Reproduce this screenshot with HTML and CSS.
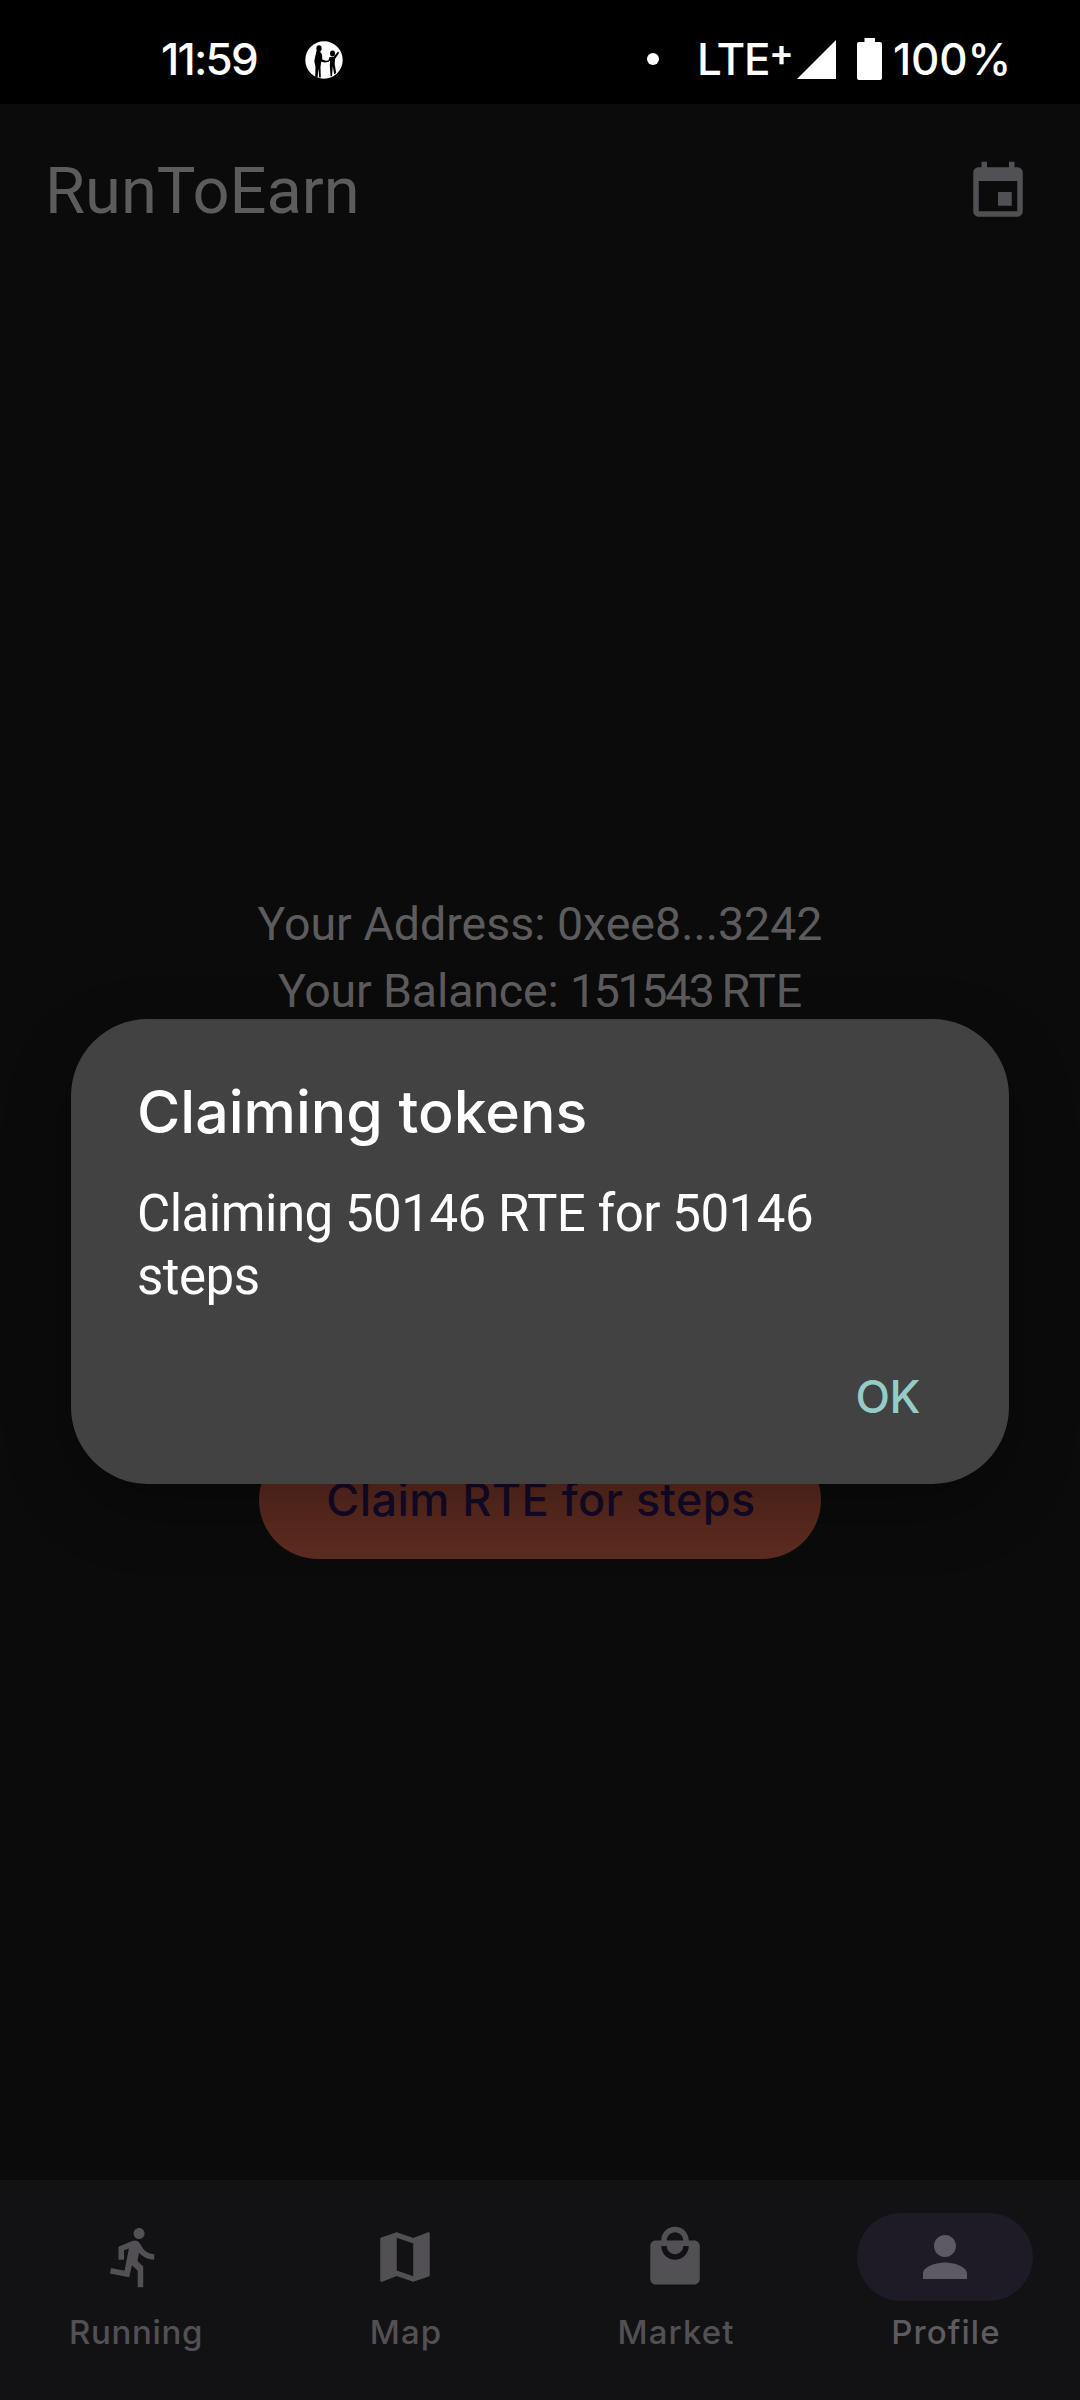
FILE: index.html
```html
<!DOCTYPE html>
<html lang="en">
<head>
<meta charset="utf-8">
<title>RunToEarn</title>
<link rel="stylesheet" href="styles.css">
</head>
<body>
<div class="screen">
  <div class="status">
    <span class="clock">11:59</span>
    <svg class="badge" viewBox="0 0 38 38">
      <circle cx="19" cy="19" r="18.700" fill="#fff"/>
      <g fill="#000">
        <ellipse cx="14" cy="7.500" rx="2.600" ry="3.200"/>
        <path d="M11.500 9.500l3.500 1 2 3 .3 5 3.700 1.200 3-.5v1.600l-4 .8-3.800-.8-.7 5.200.3 10.500h-1.600l-.7-9-1 9-2.300-.7.300-9.800-1.200-6z"/>
        <ellipse cx="27.500" cy="12.500" rx="2.500" ry="3"/>
        <path d="M24.500 16h4l4.500-5.500 1.200 1.200-4.200 6.300-.3 5 1.500 9-2 1.300-1.400-8-.8 10h-1.500l-.7-11 .4-4-1.800-1z"/>
      </g>
    </svg>
    <i class="dot"></i>
    <span class="network">LTE</span><span class="plus">+</span>
    <svg class="signal" viewBox="0 0 39 39"><path d="M39 0v39H0z" fill="#fff"/></svg>
    <svg class="battery" viewBox="0 0 25 42"><path d="M7.500 0h10.500v4h5q2 0 2 2v34q0 2-2 2H2q-2 0-2-2V6q0-2 2-2h5.500z" fill="#fff"/></svg>
    <span class="percent">100%</span>
  </div>

  <header class="appbar">
    <h1>RunToEarn</h1>
    <svg class="icon" viewBox="0 0 24 24"><path d="M17 12h-5v5h5v-5zM16 1v2H8V1H6v2H5c-1.110 0-1.990.9-1.990 2L3 19c0 1.100.89 2 2 2h14c1.100 0 2-.9 2-2V5c0-1.100-.9-2-2-2h-1V1h-2zm3 18H5V8h14v11z"/></svg>
  </header>

  <main class="content">
    <p class="address">Your Address: 0xee8...3242</p>
    <p class="balance">Your Balance: <span class="amount">151543 </span>RTE</p>
    <button class="claim">Claim RTE for steps</button>
  </main>

  <nav class="tabs">
    <a class="tab">
      <span class="pill"><svg class="icon" viewBox="0 0 24 24"><path d="M13.490 5.480c1.100 0 2-.9 2-2s-.9-2-2-2-2 .9-2 2 .9 2 2 2zm-3.600 13.900l1-4.400 2.100 2v6h2v-7.500l-2.100-2 .6-3c1.300 1.500 3.300 2.500 5.500 2.500v-2c-1.900 0-3.500-1-4.300-2.400l-1-1.600c-.4-.6-1-1-1.700-1-.3 0-.5.1-.8.1l-5.200 2.200v4.700h2v-3.400l1.800-.7-1.600 8.100-4.900-1-.4 2 7 1.400z"/></svg></span>
      <span class="label">Running</span>
    </a>
    <a class="tab">
      <span class="pill"><svg class="icon" viewBox="0 0 24 24"><path d="M20.500 3l-.16.03L15 5.100 9 3 3.360 4.900c-.21.07-.36.25-.36.48V20.500c0 .28.22.5.5.5l.16-.03L9 18.900l6 2.100 5.640-1.900c.21-.07.36-.25.36-.48V3.500c0-.28-.22-.5-.5-.5zM15 19l-6-2.110V5l6 2.110V19z"/></svg></span>
      <span class="label wide">Map</span>
    </a>
    <a class="tab">
      <span class="pill"><svg class="icon" viewBox="0 0 24 24"><path d="M19 6h-2c0-2.760-2.240-5-5-5S7 3.240 7 6H5c-1.100 0-1.990.9-1.990 2L3 20c0 1.100.9 2 2 2h14c1.100 0 2-.9 2-2V8c0-1.100-.9-2-2-2zm-7-3c1.660 0 3 1.340 3 3H9c0-1.660 1.340-3 3-3zm0 10c-2.760 0-5-2.240-5-5h2c0 1.660 1.340 3 3 3s3-1.340 3-3h2c0 2.760-2.240 5-5 5z"/></svg></span>
      <span class="label wide">Market</span>
    </a>
    <a class="tab active">
      <span class="pill"><svg class="icon" viewBox="0 0 24 24"><path d="M12 12c2.210 0 4-1.790 4-4s-1.790-4-4-4-4 1.790-4 4 1.790 4 4 4zm0 2c-2.670 0-8 1.340-8 4v2h16v-2c0-2.660-5.330-4-8-4z"/></svg></span>
      <span class="label wide">Profile</span>
    </a>
  </nav>

  <section class="dialog" role="dialog">
    <h2>Claiming tokens</h2>
    <p class="message">Claiming 50146 RTE for 50146 steps</p>
    <button class="ok">OK</button>
  </section>
</div>
</body>
</html>
```
FILE: styles.css
```css
* { box-sizing: border-box; margin: 0; padding: 0; }
body { background: #0b0b0b; font-family: Roboto, sans-serif; }
button { border: 0; background: none; font: inherit; }
svg { display: block; flex: none; }

.screen {
  position: relative;
  width: 1080px;
  height: 2400px;
  overflow: hidden;
  display: flex;
  flex-direction: column;
}

.status {
  height: 104px;
  padding: 14px 0 0 161px;
  display: flex;
  align-items: center;
  background: #000;
  color: #fff;
  font: 500 44px/52px Inter, sans-serif;
}
.clock { width: 144px; letter-spacing: -1.770px; }
.badge { width: 38px; height: 38px; margin-top: 2px; }
.dot { width: 12px; height: 12px; margin-left: 304px; border-radius: 50%; background: #fff; }
.network { width: 72px; margin-left: 38px; letter-spacing: -1.200px; }
.plus { width: 28px; padding-bottom: 13px; font-size: 37px; font-weight: 600; line-height: 40px; }
.signal { width: 39px; height: 39px; }
.battery { width: 25px; height: 42px; margin-left: 21px; }
.percent { margin-left: 11px; letter-spacing: -.200px; }

.appbar {
  height: 176px;
  padding: 0 49px 0 45px;
  display: flex;
  align-items: center;
  justify-content: space-between;
}
.appbar h1 { padding-bottom: 2px; font-size: 65px; font-weight: 400; color: #5d5b5e; }
.icon { width: 66px; height: 66px; fill: #525054; }

.content {
  flex: 1;
  padding-top: 611px;
  display: flex;
  flex-direction: column;
  align-items: center;
  color: #5d5b5e;
  font-size: 46.500px;
  line-height: 67px;
}
.balance { letter-spacing: -.150px; }
.amount { letter-spacing: -2.400px; }
.claim {
  width: 562px;
  height: 118px;
  margin-top: 416px;
  padding-left: 2px;
  border-radius: 59px;
  background: #5d2b20;
  color: #150a29;
  font: 500 45px/60px Inter, sans-serif;
  letter-spacing: .460px;
}

.tabs {
  height: 220px;
  padding-top: 33px;
  display: grid;
  grid-template-columns: repeat(4, 1fr);
  background: #121214;
}
.tab { display: flex; flex-direction: column; align-items: center; gap: 9px; color: #525054; }
.pill {
  width: 176px;
  height: 88px;
  border-radius: 44px;
  display: flex;
  align-items: center;
  justify-content: center;
}
.label { padding-left: 2px; font: 500 33px/44px Inter, sans-serif; letter-spacing: .650px; }
.label.wide { letter-spacing: 1.100px; }
.active { color: #5d5b5e; }
.active .pill { background: #1e1b26; }
.active .icon { fill: #5d5a65; }

.dialog {
  position: absolute;
  left: 71px;
  top: 1019px;
  width: 938px;
  height: 465px;
  padding: 57px 89px 0 66px;
  border-radius: 77px;
  background: #424242;
  color: #fff;
  box-shadow: 0 24px 66px rgba(0, 0, 0, .3);
  display: flex;
  flex-direction: column;
}
.dialog h2 { font: 500 59px/72px Inter, sans-serif; }
.message { margin-top: 35px; font-size: 51px; line-height: 62.500px; letter-spacing: -.490px; }
.ok {
  align-self: flex-end;
  margin-top: 59px;
  color: #96ccc7;
  font: 500 45px/60px Inter, sans-serif;
  letter-spacing: -.500px;
}
```
